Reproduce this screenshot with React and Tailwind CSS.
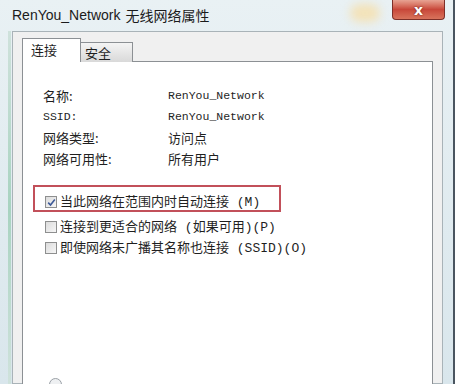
import React from 'react';

function Box({ checked }) {
  return (
    <span className="w-[12px] h-[12px] shrink-0 border border-[#8e8f8f] bg-gradient-to-br from-[#dcdcdc] to-[#f6f6f6] flex items-center justify-center">
      {checked && (
        <svg width="9" height="9" viewBox="0 0 9 9">
          <path d="M1.2 4.6 L3.5 7 L7.8 1.4" fill="none" stroke="#3d5a98" strokeWidth="1.6" />
        </svg>
      )}
    </span>
  );
}

const CJK = "font-['Noto_Sans_CJK_SC','Noto_Sans',sans-serif]";
const MONO = "font-['Liberation_Mono','DejaVu_Sans_Mono',monospace] text-[11.5px]";

function Row({ label, value, monoLabel, monoValue }) {
  return (
    <div className="flex h-[21px] items-center ml-[20px] text-[13px] text-[#1f1f1f]">
      <div className={`w-[125px] ${monoLabel ? MONO : CJK}`}>{label}</div>
      <div className={monoValue ? MONO : CJK}>{value}</div>
    </div>
  );
}

function Check({ checked, children }) {
  return (
    <div className="flex items-center h-[14px] text-[13px] text-[#1f1f1f]">
      <Box checked={checked} />
      <span className={`ml-[3px] leading-[14px] whitespace-pre ${CJK}`}>{children}</span>
    </div>
  );
}

const M = "font-['Liberation_Mono',monospace] text-[13px]";

export default function App() {
  return (
    <div className="relative w-[455px] h-[384px] overflow-hidden bg-gradient-to-b from-[#e9f1f4] to-[#d9e6ec] border-r-2 border-[#4a5560]">
      {/* aero glow behind title */}
      <div className="absolute top-[4px] left-[350px] w-[30px] h-[18px] rounded-full bg-[#f3e2b8] blur-[5px]" />

      {/* title bar */}
      <div className="h-[31px] flex items-center pl-[12px] pb-[1px] text-[14px] text-[#1b1b1b] font-['Liberation_Sans','Noto_Sans_CJK_SC',sans-serif]">
        RenYou_Network <span className={`ml-[5px] ${CJK}`}>无线网络属性</span>
      </div>

      {/* close button */}
      <div className="absolute top-0 right-[8px] w-[53px] h-[20px] rounded-b-[4px] border border-t-0 border-[#7d2f28] bg-gradient-to-b from-[#e7a393] via-[#c8473a] to-[#d8735c] flex items-center justify-center">
        <span className="text-white text-[14px] font-bold leading-none font-['DejaVu_Sans',sans-serif] [text-shadow:0_0_2px_#5a1a14]">x</span>
      </div>

      {/* frame accent line */}
      <div className="absolute left-[8px] top-[31px] w-[3px] h-[353px] bg-gradient-to-b from-[#cfe2dc] via-[#a8d3c0] to-[#cfe2dc]" />

      {/* dialog body */}
      <div className="ml-[12px] mr-[10px] h-[353px] bg-[#f0f0f0] border border-[#a9b3b8] pl-[9px] pt-[6px]">
        {/* tabs */}
        <div className="flex items-end h-[24px]">
          <div className={`w-[59px] h-[24px] bg-white border border-b-0 border-[#8c9094] pl-[8px] pt-[1px] text-[13px] text-[#1f1f1f] relative z-10 ${CJK}`}>
            连接
          </div>
          <div className={`w-[52px] h-[20px] bg-gradient-to-b from-[#f4f4f4] to-[#d9d9d9] border border-l-0 border-b-0 border-[#8c9094] pl-[4px] text-[13px] leading-[19px] text-[#1f1f1f] ${CJK}`}>
            安全
          </div>
        </div>

        {/* panel */}
        <div className="w-[411px] h-[330px] -mt-px bg-white border border-[#8c9094] pt-[23px]">
          <Row label="名称:" value="RenYou_Network" monoValue />
          <Row label="SSID:" value="RenYou_Network" monoLabel monoValue />
          <Row label="网络类型:" value="访问点" />
          <Row label="网络可用性:" value="所有用户" />

          <div className="ml-[10px] mt-[16px] w-[248px] h-[27px] border-2 border-[#c2505a] pl-[10px] pt-[8px]">
            <Check checked>
              当此网络在范围内时自动连接<span className={M}> (M)</span>
            </Check>
          </div>

          <div className="ml-[22px] mt-[4px] flex flex-col">
            <div className="h-[21px] flex items-center">
              <Check>
                连接到更适合的网络<span className={M}> (</span>如果可用<span className={M}>)(P)</span>
              </Check>
            </div>
            <div className="h-[21px] flex items-center">
              <Check>
                即使网络未广播其名称也连接<span className={M}> (SSID)(O)</span>
              </Check>
            </div>
          </div>

          <div className="ml-[26px] mt-[120px] flex items-center">
            <span className="w-[13px] h-[13px] rounded-full border border-[#9aa0a6] bg-[#eef0f2]" />
          </div>
        </div>
      </div>
    </div>
  );
}
